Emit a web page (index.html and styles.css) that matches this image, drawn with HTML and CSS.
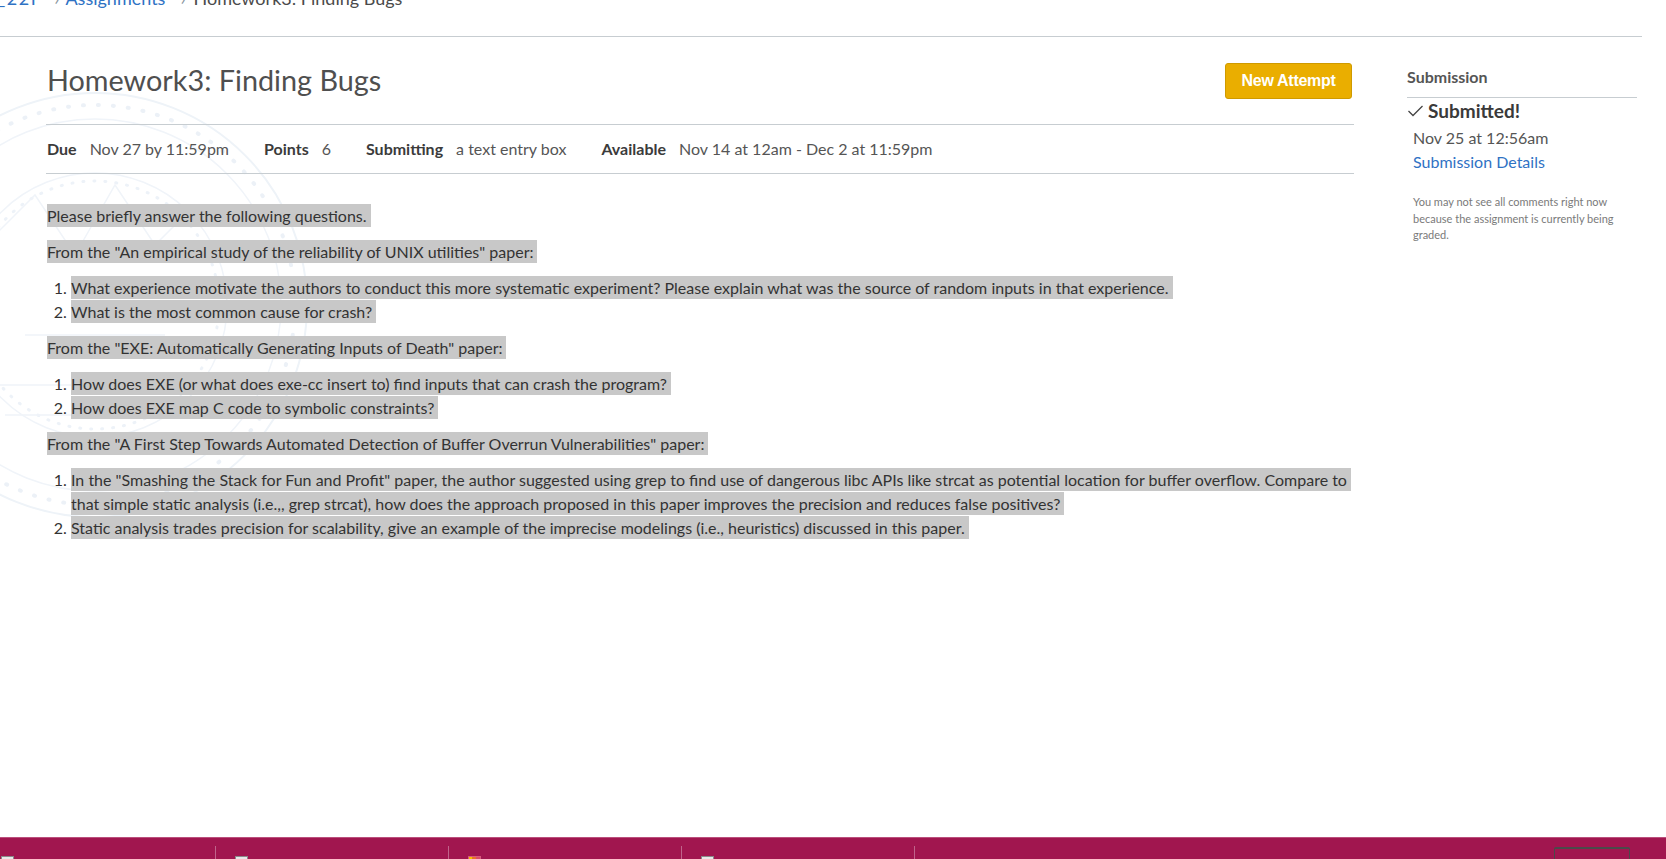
FILE: index.html
```html
<!DOCTYPE html>
<html lang="en">
<head>
<meta charset="utf-8">
<title>Homework3: Finding Bugs</title>
<link rel="stylesheet" href="styles.css">
</head>
<body>
<div class="page">
  <svg class="seal" width="440" height="440" viewBox="0 0 440 440" aria-hidden="true">
    <circle cx="220" cy="220" r="212" fill="none" stroke="#eef3f8" stroke-width="2"/>
    <circle cx="220" cy="220" r="200" fill="none" stroke="#ecf1f7" stroke-width="4" stroke-dasharray="1 14" stroke-linecap="round"/>
    <circle cx="220" cy="220" r="186" fill="none" stroke="#f0f4f9" stroke-width="1.5"/>
    <circle cx="220" cy="220" r="132" fill="none" stroke="#f0f4f9" stroke-width="1.5"/>
    <circle cx="220" cy="220" r="124" fill="none" stroke="#edf2f8" stroke-width="3" stroke-dasharray="1 10" stroke-linecap="round"/>
    <path d="M120 150 L160 110 L200 170 L240 100 L280 160 L320 120" fill="none" stroke="#f0f4f9" stroke-width="1.5"/>
    <path d="M110 300 L330 300 M130 330 L310 330 M150 250 L290 250" fill="none" stroke="#f0f4f9" stroke-width="1.5"/>
  </svg>

  <nav class="crumbs">
    <a class="crumb first link">_22F</a>
    <span class="sep sep-a">&#x203A;</span>
    <a class="crumb link">Assignments</a>
    <span class="sep sep-b">&#x203A;</span>
    <span class="crumb current">Homework3: Finding Bugs</span>
  </nav>

  <div class="main">
    <div class="content">
      <div class="head">
        <h1 class="title">Homework3: Finding Bugs</h1>
        <button class="btn-attempt">New Attempt</button>
      </div>

      <ul class="meta">
        <li class="meta-item"><span class="meta-label">Due</span><span class="meta-value">Nov 27 by 11:59pm</span></li>
        <li class="meta-item"><span class="meta-label">Points</span><span class="meta-value">6</span></li>
        <li class="meta-item"><span class="meta-label">Submitting</span><span class="meta-value">a text entry box</span></li>
        <li class="meta-item"><span class="meta-label">Available</span><span class="meta-value">Nov 14 at 12am - Dec 2 at 11:59pm</span></li>
      </ul>

      <div class="description">
        <p><span class="hl">Please briefly answer the following questions.</span></p>
        <p><span class="hl">From the "An empirical study of the reliability of UNIX utilities" paper:</span></p>
        <ol>
          <li><span class="hl">What experience motivate the authors to conduct this more systematic experiment? Please explain what was the source of random inputs in that experience.</span></li>
          <li><span class="hl">What is the most common cause for crash?</span></li>
        </ol>
        <p><span class="hl">From the "EXE: Automatically Generating Inputs of Death" paper:</span></p>
        <ol>
          <li><span class="hl">How does EXE (or what does exe-cc insert to) find inputs that can crash the program?</span></li>
          <li><span class="hl">How does EXE map C code to symbolic constraints?</span></li>
        </ol>
        <p><span class="hl">From the "A First Step Towards Automated Detection of Buffer Overrun Vulnerabilities" paper:</span></p>
        <ol>
          <li><span class="hl">In the "Smashing the Stack for Fun and Profit" paper, the author suggested using grep to find use of dangerous libc APIs like strcat as potential location for buffer overflow. Compare to that simple static analysis (i.e.,, grep strcat), how does the approach proposed in this paper improves the precision and reduces false positives?</span></li>
          <li><span class="hl">Static analysis trades precision for scalability, give an example of the imprecise modelings (i.e., heuristics) discussed in this paper.</span></li>
        </ol>
      </div>
    </div>

    <aside class="sidebar">
      <h2 class="side-title">Submission</h2>
      <div class="submitted">
        <svg class="check" width="17" height="14" viewBox="0 0 17 14" aria-hidden="true">
          <polyline points="1.5,7 6,11.5 15.5,2" fill="none" stroke="#444" stroke-width="1.3"/>
        </svg>
        <span>Submitted!</span>
      </div>
      <div class="side-body">
        <div class="side-date">Nov 25 at 12:56am</div>
        <a class="side-link link">Submission Details</a>
        <p class="side-note">You may not see all comments right now because the assignment is currently being graded.</p>
      </div>
    </aside>
  </div>

  <div class="spacer"></div>

  <footer class="taskbar">
    <div class="task"><span class="task-icon"></span></div>
    <div class="task"><span class="task-icon"></span></div>
    <div class="task"><span class="task-icon multi"></span></div>
    <div class="task"><span class="task-icon"></span></div>
    <div class="task-rest"><span class="task-box"></span></div>
  </footer>
</div>
</body>
</html>
```

FILE: styles.css
```css
html, body {
  margin: 0;
  padding: 0;
  background: #ffffff;
}

body {
  width: 1666px;
  height: 859px;
  overflow: hidden;
  font-family: Lato, "Open Sans", "Liberation Sans", sans-serif;
  color: #333333;
}

.page {
  position: relative;
  display: flex;
  flex-direction: column;
  height: 859px;
}

.seal {
  position: absolute;
  left: -125px;
  top: 85px;
  z-index: 0;
}

.crumbs {
  position: relative;
  z-index: 1;
  display: flex;
  align-items: baseline;
  width: 1642px;
  height: 36px;
  border-bottom: 1px solid #c7cdd1;
  overflow: hidden;
  box-sizing: content-box;
  font-size: 18px;
  line-height: 22px;
}

.crumb {
  margin-top: -13px;
  white-space: nowrap;
}

.crumb.first {
  margin-left: -3px;
  letter-spacing: 1.5px;
}

.link {
  color: #2f72c4;
  text-decoration: none;
}

.crumb.current {
  color: #4b4b4b;
}

.sep {
  margin-top: -13px;
  color: #8b969e;
  font-size: 18px;
}

.sep-a {
  margin-left: 12px;
  margin-right: 6px;
}

.sep-b {
  margin-left: 15px;
  margin-right: 8px;
}

.main {
  position: relative;
  z-index: 1;
  display: flex;
  padding-left: 46px;
  gap: 53px;
}

.content {
  width: 1308px;
}

.head {
  display: flex;
  justify-content: space-between;
  align-items: flex-start;
  margin-top: 26px;
}

.title {
  margin: -1px 0 0 1px;
  font-size: 28.8px;
  line-height: 36px;
  font-weight: 400;
  color: #4f4f4f;
}

.btn-attempt {
  margin-right: 2px;
  width: 127px;
  height: 36px;
  padding: 0;
  background: #eaae00;
  border: 1px solid #cf9a00;
  border-radius: 3px;
  color: #ffffff;
  font-family: "Liberation Sans", Arial, sans-serif;
  font-weight: 700;
  font-size: 16px;
  letter-spacing: -0.3px;
}

.meta {
  display: flex;
  gap: 35px;
  list-style: none;
  margin: 25px 0 0 0;
  padding: 12px 0 12px 1px;
  border-top: 1px solid #c7cdd1;
  border-bottom: 1px solid #c7cdd1;
  font-size: 16px;
  line-height: 24px;
}

.meta-item {
  display: flex;
  gap: 13px;
}

.meta-label {
  font-weight: 700;
  color: #3b3b3b;
}

.meta-value {
  color: #555555;
}

.description {
  padding-top: 18px;
  padding-left: 1px;
  font-size: 16px;
  line-height: 24px;
  color: #333333;
}

.description p {
  margin: 12px 0;
}

.description ol {
  margin: 12px 0;
  padding-left: 24px;
}

.hl {
  background: #c8c8c8;
  padding: 2.4px 4px 2.4px 0;
  -webkit-box-decoration-break: clone;
  box-decoration-break: clone;
}

.sidebar {
  width: 230px;
  padding-top: 30px;
}

.side-title {
  margin: 0;
  padding-bottom: 10px;
  border-bottom: 1px solid #c7cdd1;
  font-size: 16px;
  line-height: 20px;
  font-weight: 700;
  color: #555555;
}

.submitted {
  display: flex;
  align-items: center;
  gap: 4px;
  margin-top: 0;
  font-size: 19px;
  line-height: 26px;
  font-weight: 700;
  color: #3a3a3a;
}

.side-body {
  padding-left: 6px;
}

.side-date {
  margin-top: 2px;
  font-size: 16px;
  line-height: 24px;
  color: #555555;
}

.side-link {
  display: block;
  font-size: 16px;
  line-height: 24px;
}

.side-note {
  margin: 20px 0 0 0;
  font-size: 11px;
  line-height: 16.5px;
  color: #7a7a7a;
}

.spacer {
  flex: 1;
}

.taskbar {
  display: flex;
  height: 22px;
  background: #a1164f;
  border-top: 1px solid #bb4f7c;
  box-sizing: border-box;
}

.task {
  position: relative;
  width: 232px;
  border-right: 1px solid #c0648b;
  margin-top: 8px;
  height: 14px;
}

.task:first-child {
  width: 215px;
}

.task-icon {
  position: absolute;
  left: 19px;
  bottom: 0;
  width: 11px;
  height: 3px;
  background: #e8e8e8;
  border: 1px solid #8a8a8a;
  border-bottom: 0;
}

.task:first-child .task-icon {
  left: 1px;
}

.task-icon.multi {
  background: linear-gradient(90deg, #f2c200 0 30%, #e8702a 30% 60%, #d94a6a 60% 100%);
  border-color: #d65c7c;
}

.task-rest {
  position: relative;
  flex: 1;
}

.task-box {
  position: absolute;
  right: 36px;
  top: 9px;
  width: 74px;
  height: 20px;
  border: 1px solid #4a4a4a;
  border-top-width: 2px;
  border-radius: 2px;
}
```
